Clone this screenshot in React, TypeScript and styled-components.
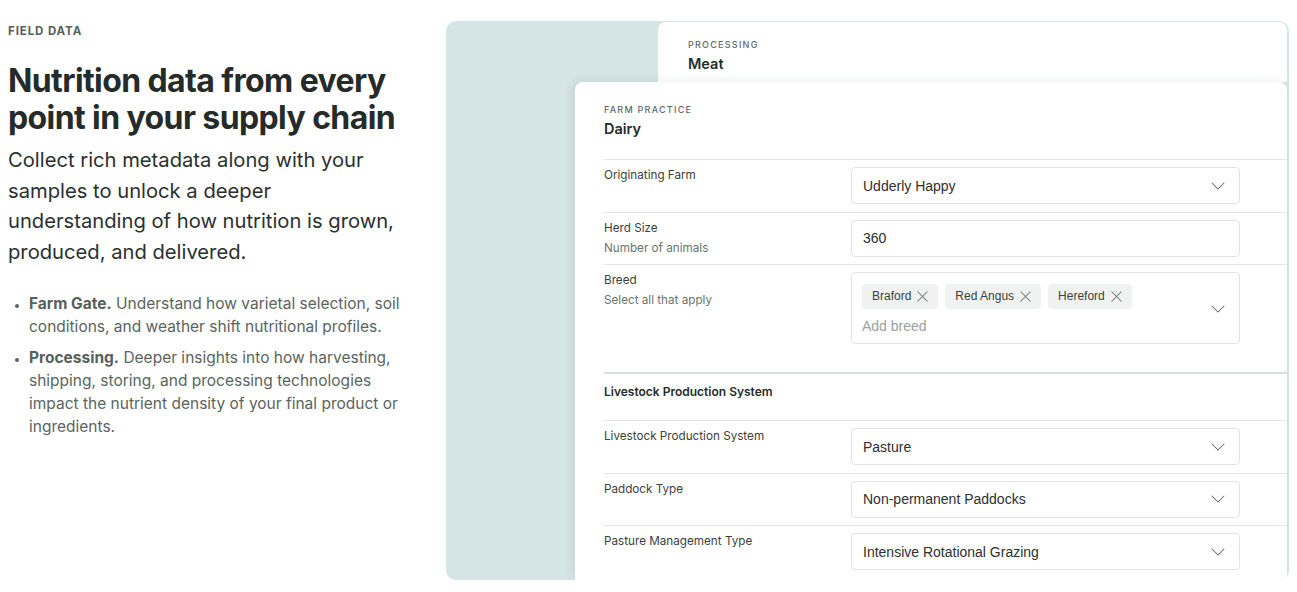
import styled, { createGlobalStyle } from 'styled-components';
import { ChevronDown, X } from 'lucide-react';

const GlobalStyle = createGlobalStyle`
  * { box-sizing: border-box; }
  body {
    margin: 0;
    background: #ffffff;
    font-family: Inter, "Noto Sans", "Liberation Sans", sans-serif;
    -webkit-font-smoothing: antialiased;
  }
`;

const fieldFont = `"Liberation Sans", Arial, Helvetica, sans-serif`;

const Page = styled.main`
  display: flex;
  align-items: flex-start;
  gap: 38px;
  padding: 21px 8px 0 8px;
  width: 1297px;
  height: 592px;
  overflow: hidden;
`;

const Intro = styled.section`
  width: 400px;
  flex-shrink: 0;
  padding-top: 3px;
`;

const Eyebrow = styled.div`
  font-size: 11.5px;
  font-weight: 700;
  letter-spacing: 0.9px;
  text-transform: uppercase;
  color: #56605c;
  line-height: 14px;
`;

const Heading = styled.h1`
  margin: 24px 0 0;
  font-size: 32px;
  line-height: 37px;
  font-weight: 700;
  letter-spacing: -0.6px;
  color: #262b2a;
`;

const Lead = styled.p`
  margin: 9px 0 0;
  font-size: 20.2px;
  line-height: 30.5px;
  color: #2b302f;
`;

const Points = styled.ul`
  margin: 25px 0 0;
  padding: 0 0 0 21px;
  list-style: disc;
  color: #5a6460;
  font-size: 15.5px;
  line-height: 23px;
  & li + li { margin-top: 8px; }
  & li::marker { font-size: 11px; }
  & strong { font-weight: 700; color: #56605c; }
`;

const Panel = styled.section`
  flex: 1;
  height: 559px;
  background: #d5e4e4;
  border-radius: 10px;
  overflow: hidden;
  padding: 1px 2px 0 0;
  display: flex;
  flex-direction: column;
`;

const BackCard = styled.div`
  margin-left: 212px;
  height: 60px;
  background: #ffffff;
  border-top-left-radius: 8px;
  border-top-right-radius: 8px;
  padding: 17px 30px 0;
  flex-shrink: 0;
`;

const Kicker = styled.div`
  font-size: 9px;
  font-weight: 500;
  letter-spacing: 1.25px;
  text-transform: uppercase;
  color: #5f6866;
  line-height: 12px;
`;

const CardTitle = styled.div`
  margin-top: 4px;
  font-size: 14.5px;
  font-weight: 600;
  color: #262b2a;
  line-height: 18px;
`;

const FrontCard = styled.div`
  margin-left: 129px;
  flex: 1;
  background: #ffffff;
  border-top-left-radius: 8px;
  border-top-right-radius: 8px;
  padding: 22px 0 0 29px;
  box-shadow: -3px -2px 10px rgba(40, 60, 60, 0.08);
`;

const CardHeader = styled.div`
  padding-bottom: 21px;
`;

const Row = styled.div<{ $tall?: boolean }>`
  display: grid;
  grid-template-columns: 247px 389px;
  border-top: 1px solid #e3e8e7;
  padding: 7px 0 ${({ $tall }) => ($tall ? '28px' : '7.5px')};
`;

const SectionRow = styled.div`
  border-top: 2px solid #d9e0df;
  height: 48px;
  display: flex;
  align-items: center;
  font-size: 12px;
  font-weight: 600;
  color: #262b2a;
  padding-bottom: 11px;
`;

const LabelBlock = styled.div`
  display: flex;
  flex-direction: column;
`;

const Label = styled.span`
  font-size: 11.7px;
  color: #3a4240;
  line-height: 17px;
`;

const SubLabel = styled.span`
  margin-top: 3px;
  font-size: 11.7px;
  color: #6a7370;
  line-height: 17px;
`;

const Field = styled.div`
  height: 37px;
  border: 1px solid #dfe4e3;
  border-radius: 4px;
  display: flex;
  align-items: center;
  justify-content: space-between;
  padding: 0 9px 0 11px;
  font-family: ${fieldFont};
  font-size: 14px;
  color: #2c302f;
`;

const MultiField = styled.div`
  min-height: 72px;
  border: 1px solid #dfe4e3;
  border-radius: 4px;
  display: flex;
  align-items: center;
  justify-content: space-between;
  padding: 10px 9px 8px 10px;
  font-family: ${fieldFont};
`;

const ChipArea = styled.div`
  display: flex;
  flex-direction: column;
  gap: 8px;
`;

const Chips = styled.div`
  display: flex;
  gap: 7px;
`;

const Chip = styled.span`
  height: 25px;
  display: inline-flex;
  align-items: center;
  gap: 2px;
  padding: 0 6px 0 10px;
  background: #eff2f1;
  border-radius: 4px;
  font-size: 12px;
  color: #3a4240;
  & svg { color: #6a7370; }
`;

const Placeholder = styled.span`
  font-size: 14px;
  color: #9aa19f;
  line-height: 18px;
`;

const Chevron = () => <ChevronDown size={24} strokeWidth={1.05} color="#5f6866" />;

const selects = [
  { label: 'Livestock Production System', value: 'Pasture' },
  { label: 'Paddock Type', value: 'Non-permanent Paddocks' },
  { label: 'Pasture Management Type', value: 'Intensive Rotational Grazing' },
];

export default function App() {
  return (
    <>
      <GlobalStyle />
      <Page>
        <Intro>
          <Eyebrow>Field Data</Eyebrow>
          <Heading>Nutrition data from every point in your supply chain</Heading>
          <Lead>
            Collect rich metadata along with your samples to unlock a deeper understanding of how
            nutrition is grown, produced, and delivered.
          </Lead>
          <Points>
            <li>
              <strong>Farm Gate.</strong> Understand how varietal selection, soil conditions, and
              weather shift nutritional profiles.
            </li>
            <li>
              <strong>Processing.</strong> Deeper insights into how harvesting, shipping, storing,
              and processing technologies impact the nutrient density of your final product or
              ingredients.
            </li>
          </Points>
        </Intro>

        <Panel>
          <BackCard>
            <Kicker>Processing</Kicker>
            <CardTitle>Meat</CardTitle>
          </BackCard>
          <FrontCard>
            <CardHeader>
              <Kicker>Farm Practice</Kicker>
              <CardTitle>Dairy</CardTitle>
            </CardHeader>

            <Row>
              <LabelBlock>
                <Label>Originating Farm</Label>
              </LabelBlock>
              <Field>
                Udderly Happy
                <Chevron />
              </Field>
            </Row>

            <Row>
              <LabelBlock>
                <Label>Herd Size</Label>
                <SubLabel>Number of animals</SubLabel>
              </LabelBlock>
              <Field>360</Field>
            </Row>

            <Row $tall>
              <LabelBlock>
                <Label>Breed</Label>
                <SubLabel>Select all that apply</SubLabel>
              </LabelBlock>
              <MultiField>
                <ChipArea>
                  <Chips>
                    {['Braford', 'Red Angus', 'Hereford'].map((b) => (
                      <Chip key={b}>
                        {b}
                        <X size={19} strokeWidth={1.3} />
                      </Chip>
                    ))}
                  </Chips>
                  <Placeholder>Add breed</Placeholder>
                </ChipArea>
                <Chevron />
              </MultiField>
            </Row>

            <SectionRow>Livestock Production System</SectionRow>

            {selects.map((s) => (
              <Row key={s.label}>
                <LabelBlock>
                  <Label>{s.label}</Label>
                </LabelBlock>
                <Field>
                  {s.value}
                  <Chevron />
                </Field>
              </Row>
            ))}
          </FrontCard>
        </Panel>
      </Page>
    </>
  );
}
